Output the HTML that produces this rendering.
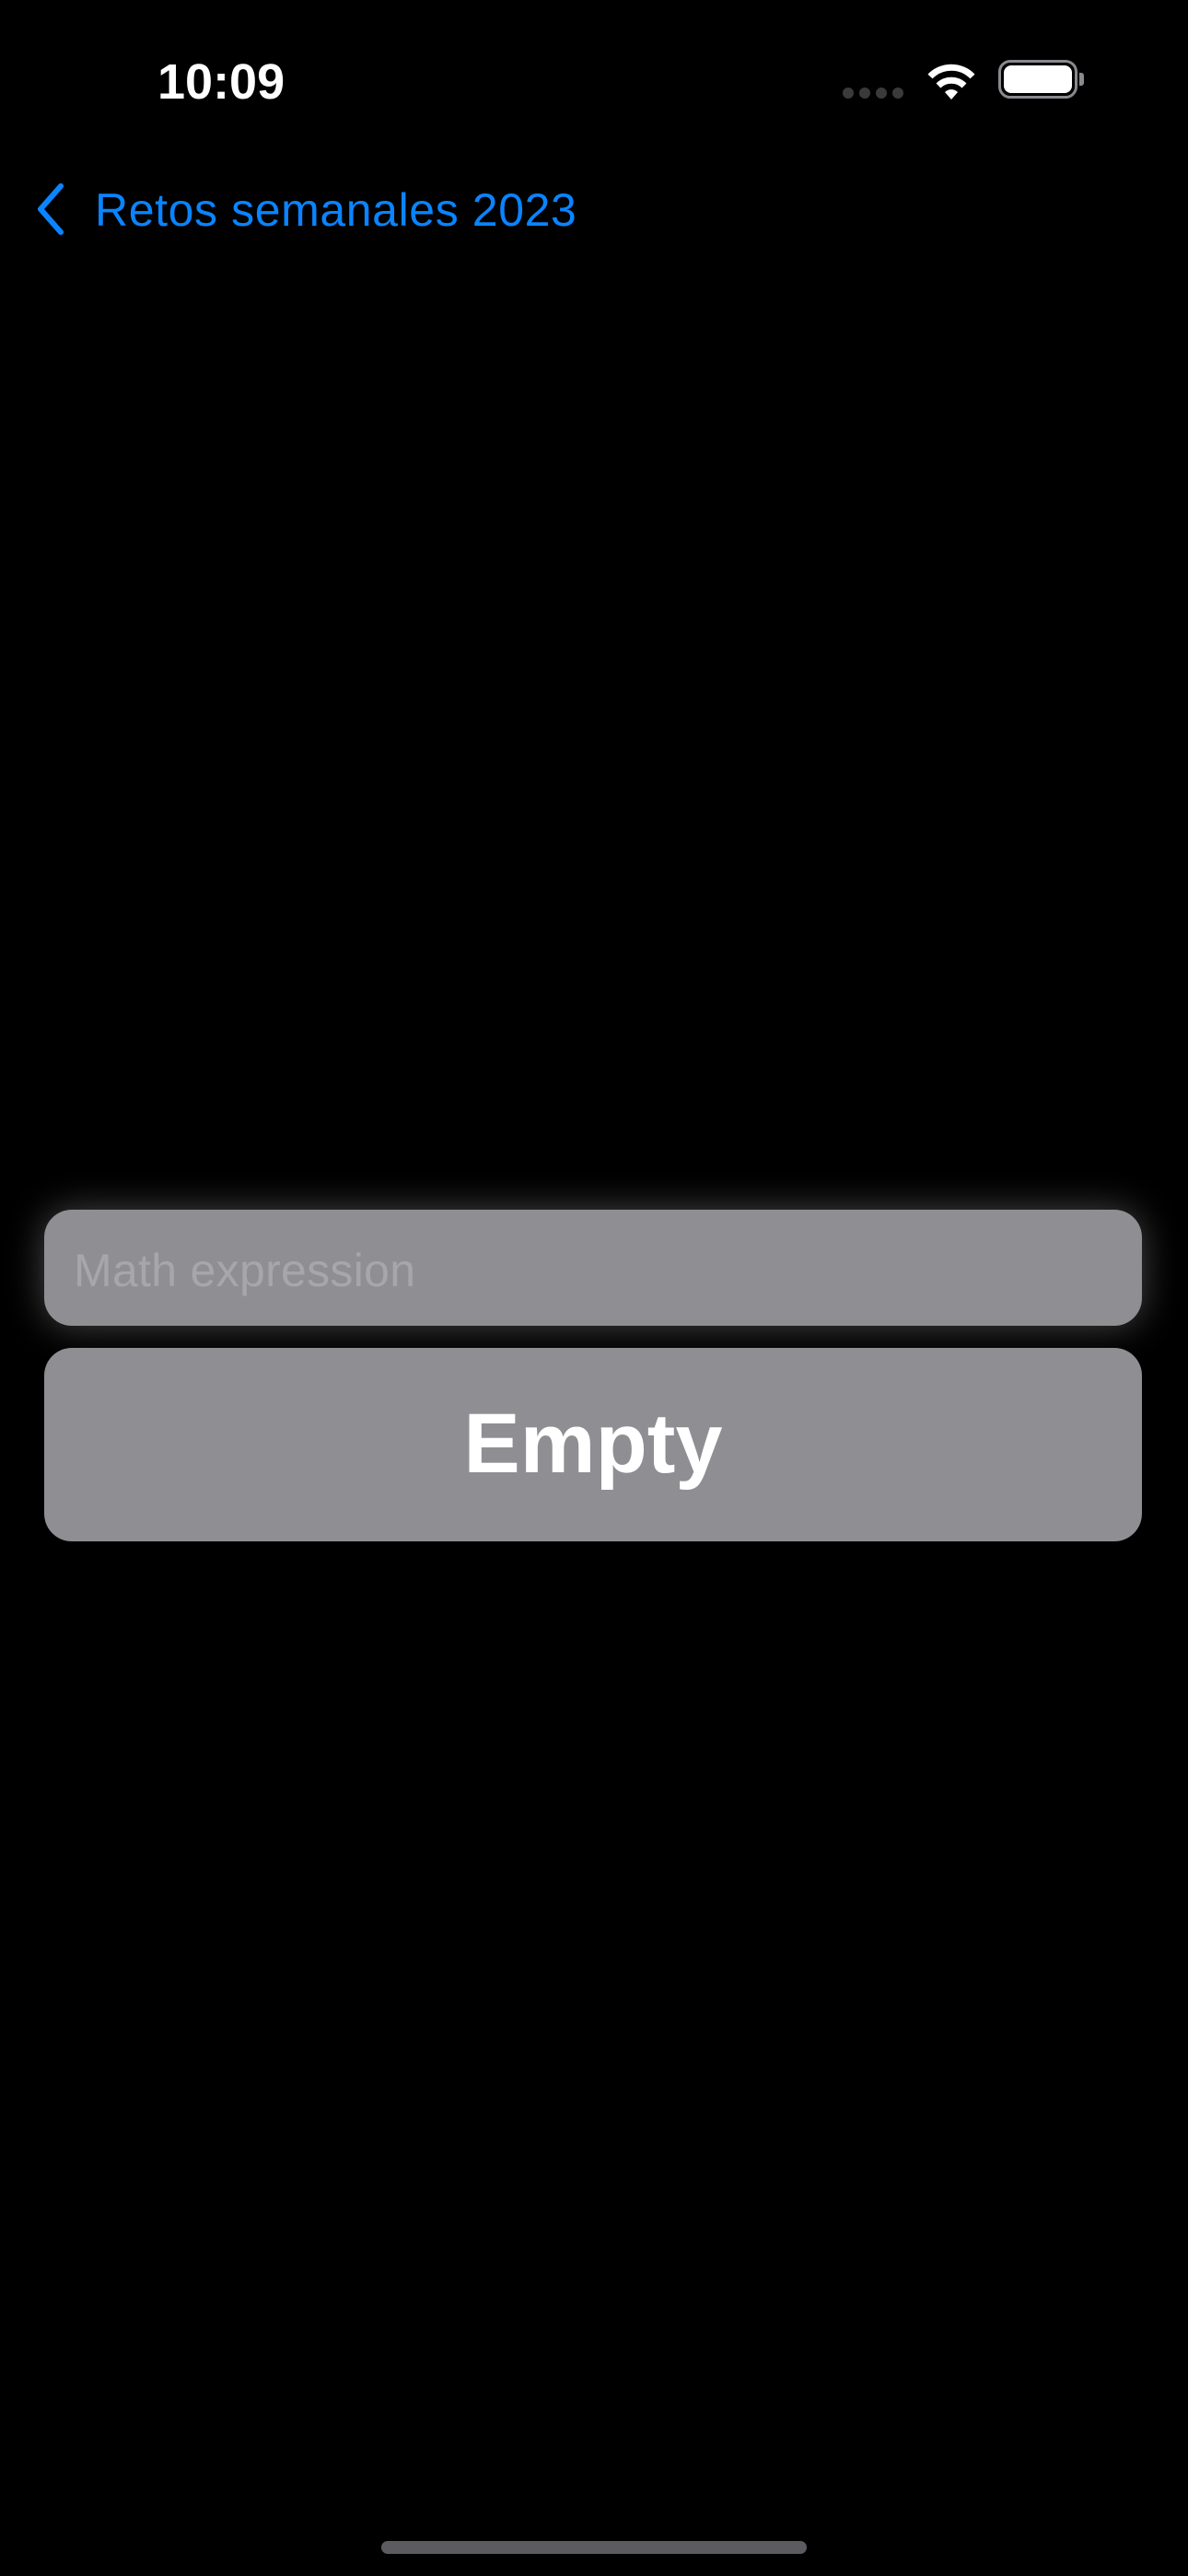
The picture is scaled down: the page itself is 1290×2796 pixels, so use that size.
<!DOCTYPE html>
<html><head><meta charset="utf-8"><style>
html,body{margin:0;padding:0;background:#000;width:1290px;height:2796px;overflow:hidden;font-family:"Liberation Sans",sans-serif;}
.abs{position:absolute;}
</style></head><body>
<div class="abs" style="left:171px;top:58px;font-size:54px;font-weight:bold;color:#fff;">10:09</div>
<div class="abs" style="left:915px;top:95px;width:66px;height:12px;">
 <span class="abs" style="left:0;width:12px;height:12px;border-radius:6px;background:#3a3a3c"></span>
 <span class="abs" style="left:18px;width:12px;height:12px;border-radius:6px;background:#3a3a3c"></span>
 <span class="abs" style="left:36px;width:12px;height:12px;border-radius:6px;background:#3a3a3c"></span>
 <span class="abs" style="left:54px;width:12px;height:12px;border-radius:6px;background:#3a3a3c"></span>
</div>
<svg class="abs" style="left:1002px;top:64px" width="62" height="46" viewBox="0 0 62 46">
 <path d="M31 44 L24 36 A10 10 0 0 1 38 36 Z" fill="#fff"/>
 <path d="M17 29 A20 20 0 0 1 45 29" stroke="#fff" stroke-width="7" fill="none"/>
 <path d="M8 19 A32 32 0 0 1 54 19" stroke="#fff" stroke-width="7" fill="none"/>
</svg>
<div class="abs" style="left:1084px;top:65px;width:86px;height:42px;border:3px solid #8a8a8e;border-radius:13px;box-sizing:border-box;"></div>
<div class="abs" style="left:1090px;top:71px;width:74px;height:30px;background:#fff;border-radius:8px;"></div>
<div class="abs" style="left:1172px;top:79px;width:5px;height:14px;background:#8a8a8e;border-radius:0 3px 3px 0;"></div>
<svg class="abs" style="left:36px;top:198px" width="40" height="58" viewBox="0 0 40 58">
 <path d="M30 4 L8 29 L30 54" stroke="#0a84ff" stroke-width="6" fill="none" stroke-linecap="round" stroke-linejoin="round"/>
</svg>
<div class="abs" style="left:103px;top:199px;font-size:50px;letter-spacing:0.6px;color:#0a84ff;">Retos semanales 2023</div>
<div class="abs" style="left:48px;top:1313px;width:1192px;height:126px;background:#8e8e93;border-radius:30px;box-shadow:0 0 40px rgba(255,255,255,0.28);"></div>
<div class="abs" style="left:80px;top:1350px;font-size:50px;letter-spacing:0.3px;color:#a7a7ab;">Math expression</div>
<div class="abs" style="left:48px;top:1463px;width:1192px;height:210px;background:#8e8e93;border-radius:30px;"></div>
<div class="abs" style="left:48px;top:1515px;width:1192px;text-align:center;font-size:92px;font-weight:bold;color:#fff;">Empty</div>
<div class="abs" style="left:414px;top:2758px;width:462px;height:14px;border-radius:7px;background:#5c5c60;"></div>
</body></html>
